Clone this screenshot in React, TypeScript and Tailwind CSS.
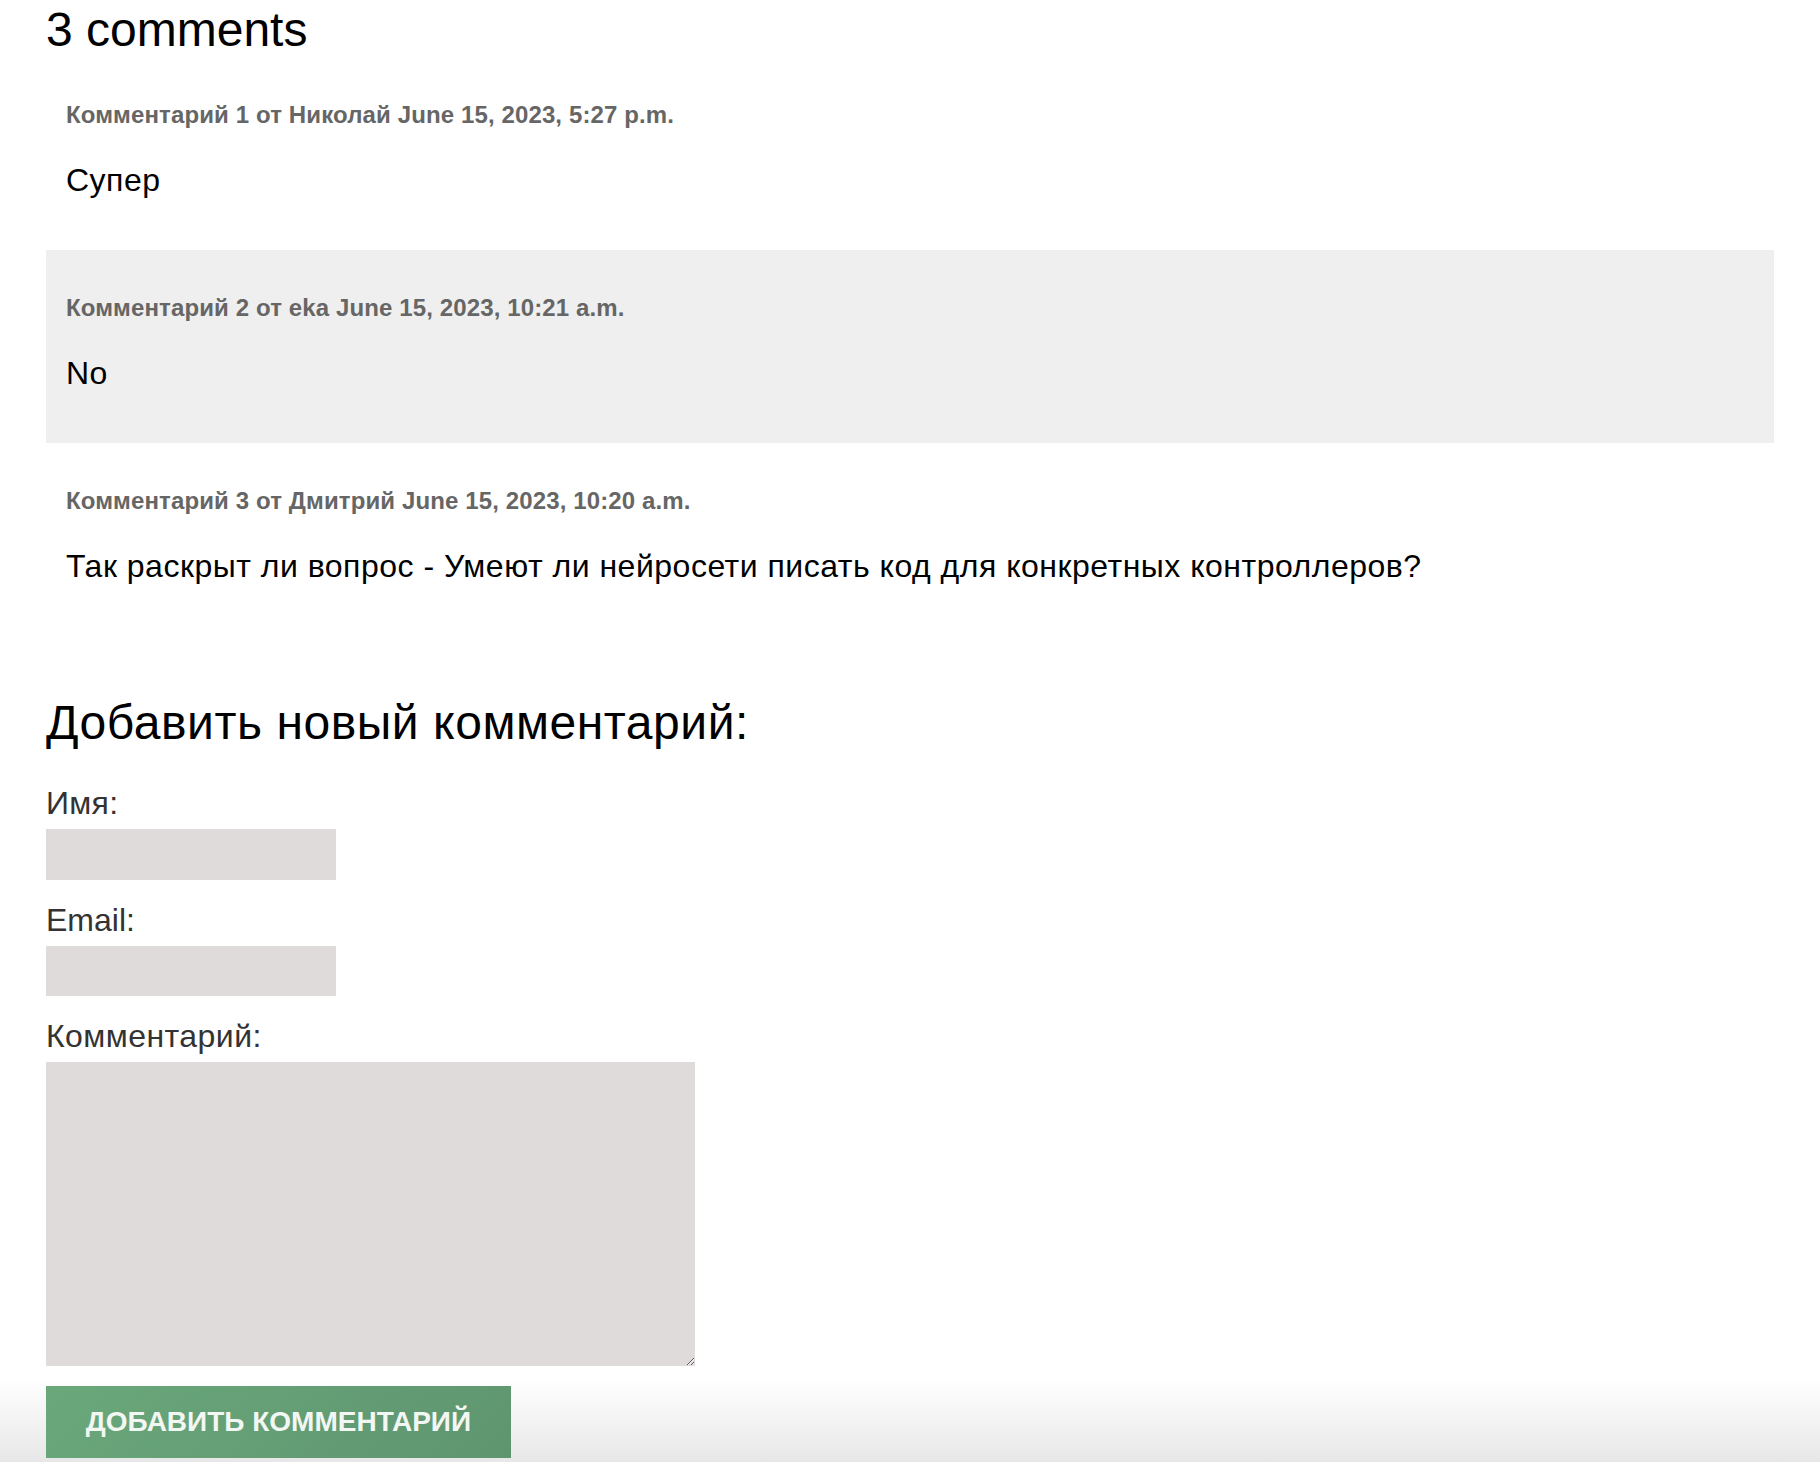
import React from "react";

const comments = [
  {
    id: 1,
    author: "Николай",
    date: "June 15, 2023, 5:27 p.m.",
    text: "Супер",
  },
  {
    id: 2,
    author: "eka",
    date: "June 15, 2023, 10:21 a.m.",
    text: "No",
  },
  {
    id: 3,
    author: "Дмитрий",
    date: "June 15, 2023, 10:20 a.m.",
    text: "Так раскрыт ли вопрос - Умеют ли нейросети писать код для конкретных контроллеров?",
  },
];

export default function App() {
  return (
    <div className="min-h-screen bg-[linear-gradient(to_bottom,#ffffff_calc(100%-86px),#e6e6e6)] font-['Liberation_Sans',Arial,sans-serif] text-black">
      <div className="px-[46px]">
        {/* Comments list */}
        <h2 className="mt-[3px] text-[48px] leading-[54px] font-normal">
          {comments.length} comments
        </h2>

        <div className="w-[1728px]">
          {comments.map((c, i) => (
            <div
              key={c.id}
              className={`px-[20px] pt-[44px] pb-[52px] ${i % 2 === 1 ? "bg-[#efefef]" : ""}`}
            >
              <p className="text-[24px] leading-[28px] font-bold tracking-[0.12px] text-[#666666]">
                Комментарий {c.id} от {c.author} {c.date}
              </p>
              <p className="mt-[33px] text-[32px] leading-[36px] tracking-[0.5px]">{c.text}</p>
            </div>
          ))}
        </div>

        {/* New comment form */}
        <h2 className="mt-[60px] text-[48px] leading-[54px] font-normal tracking-[0.55px]">
          Добавить новый комментарий:
        </h2>

        <form className="flex flex-col items-start" onSubmit={(e) => e.preventDefault()}>
          <label htmlFor="name" className="mt-[35px] text-[32px] leading-[36px] tracking-[0.3px] text-[#333333]">
            Имя:
          </label>
          <input
            id="name"
            type="text"
            className="mt-[8px] h-[51px] w-[290px] bg-[#e0dbdb] px-2 text-[28px] outline-none"
          />

          <label htmlFor="email" className="mt-[22px] text-[32px] leading-[36px] text-[#333333]">
            Email:
          </label>
          <input
            id="email"
            type="email"
            className="mt-[8px] h-[50px] w-[290px] bg-[#e0dbdb] px-2 text-[28px] outline-none"
          />

          <label htmlFor="comment" className="mt-[22px] text-[32px] leading-[36px] tracking-[0.45px] text-[#333333]">
            Комментарий:
          </label>
          <textarea
            id="comment"
            className="mt-[8px] block h-[304px] w-[649px] bg-[#e0dbdb] p-2 text-[28px] outline-none"
          />

          <button
            type="submit"
            className="mt-[20px] flex h-[72px] w-[465px] items-center justify-center bg-[linear-gradient(135deg,#6aa87a,#5e9570)] text-[28px] leading-[32px] font-bold uppercase text-[#f3f7f3]"
          >
            Добавить комментарий
          </button>
        </form>
      </div>
    </div>
  );
}
